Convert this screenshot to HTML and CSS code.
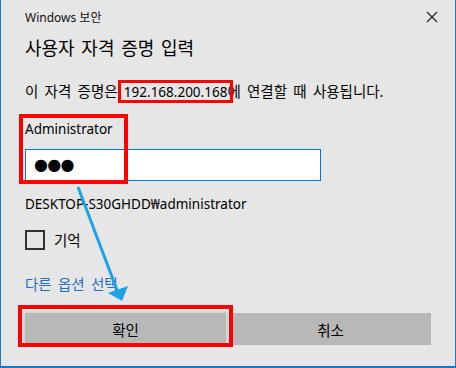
FILE: index.html
```html
<!DOCTYPE html>
<html lang="ko">
<head>
<meta charset="utf-8">
<link rel="stylesheet" href="styles.css">
</head>
<body>
<div class="window">
  <div class="titlebar">
    <span class="app-name">Windows 보안</span>
    <svg class="close" width="12" height="12" viewBox="0 0 12 12"><path d="M1 1 L11 11 M11 1 L1 11" stroke="#222" stroke-width="1.1" fill="none"/></svg>
  </div>
  <h1 class="heading">사용자 자격 증명 입력</h1>
  <p class="desc">이 자격 증명은 <span class="latin">192.168.200.168</span>에 연결할 때 사용됩니다.</p>
  <div class="user latin">Administrator</div>
  <div class="input"><span class="dots">●●●</span></div>
  <div class="domain latin">DESKTOP-S30GHDD₩administrator</div>
  <label class="remember"><span class="checkbox"></span><span>기억</span></label>
  <a class="more">다른 옵션 선택</a>
  <div class="buttons">
    <button class="btn focused">확인</button>
    <button class="btn">취소</button>
  </div>

  <div class="mark mark-ip"></div>
  <div class="mark mark-user"></div>
  <div class="mark mark-ok"></div>
  <svg class="arrow" width="456" height="368" viewBox="0 0 456 368">
    <line x1="78" y1="187" x2="117" y2="290" stroke="#1ba3e6" stroke-width="3"/>
    <polygon points="122,301 108,293 128,286" fill="#1ba3e6"/>
  </svg>
</div>
</body>
</html>
```
FILE: styles.css
```css
* { box-sizing: border-box; }
html, body { margin: 0; padding: 0; }
body {
  width: 456px;
  height: 368px;
  overflow: hidden;
  background: #e6e6e6;
  font-family: "Noto Sans", "Noto Sans CJK KR", sans-serif;
  color: #000;
}
.window {
  position: relative;
  width: 456px;
  height: 368px;
  border-left: 1px solid #1979ca;
  border-right: 1px solid #1979ca;
  border-bottom: 2px solid #1979ca;
  padding: 0 24px;
  display: flex;
  flex-direction: column;
}
.titlebar {
  height: 34px;
  display: flex;
  align-items: center;
  justify-content: space-between;
  margin-right: -7px;
}
.app-name {
  font-size: 12px;
  color: #111;
}
.heading {
  margin: 0;
  font-weight: normal;
  font-size: 18px;
  word-spacing: 2px;
  line-height: 28px;
  height: 28px;
}
.desc {
  margin: 19px 0 0;
  font-size: 14.5px;
  word-spacing: 2.5px;
  line-height: 20px;
}
.latin {
  font-size: 13.5px;
}
.user {
  margin-top: 17px;
  line-height: 20px;
}
.input {
  margin-top: 10px;
  width: 296px;
  height: 32px;
  background: #fff;
  border: 1px solid #0078d7;
  display: flex;
  align-items: center;
  padding-left: 8px;
}
.dots {
  font-family: "DejaVu Sans", sans-serif;
  font-size: 16px;
  letter-spacing: -0.7px;
  line-height: 1;
}
.domain {
  margin-top: 13px;
  line-height: 20px;
}
.remember {
  margin-top: 16px;
  display: flex;
  align-items: center;
  gap: 9px;
  font-size: 14.5px;
  line-height: 20px;
}
.checkbox {
  width: 20px;
  height: 20px;
  border: 2px solid #333;
}
.more {
  margin-top: 24px;
  font-size: 14.5px;
  word-spacing: 2.5px;
  line-height: 20px;
  color: #1f6fc5;
}
.buttons {
  margin-top: 19px;
  display: flex;
  gap: 4px;
}
.btn {
  flex: 1;
  height: 32px;
  border: none;
  background: #b8b8b8;
  font-family: inherit;
  font-size: 14.5px;
  color: #000;
  padding: 0;
}
.btn.focused {
  box-shadow: 0 0 0 2px #d6d6d6;
}
.mark {
  position: absolute;
  border: 4px solid #ff0000;
}
.mark-ip { left: 117px; top: 80px; width: 115px; height: 23px; border-width: 3px; }
.mark-user { left: 18px; top: 114px; width: 109px; height: 70px; }
.mark-ok { left: 17px; top: 305px; width: 215px; height: 42px; }
.arrow {
  position: absolute;
  left: -1px;
  top: 0;
}
```
